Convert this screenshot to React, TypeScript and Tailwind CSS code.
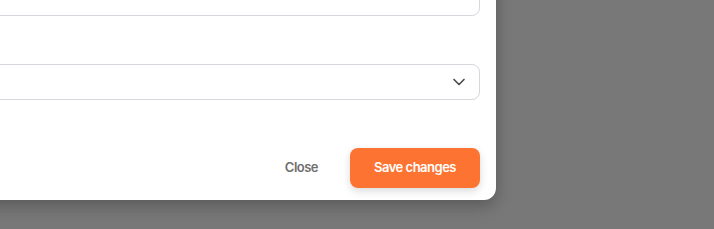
import { ChevronDown } from "lucide-react";

export default function App() {
  return (
    <div
      className="w-[714px] h-[229px] overflow-hidden bg-[#787878]"
      style={{ fontFamily: "Inter, 'Noto Sans', sans-serif" }}
    >
      <div className="w-[600px] -ml-[104px] -mt-[40px] bg-white rounded-b-xl shadow-[0_6px_16px_rgba(0,0,0,0.25)] px-4 pt-4 pb-3">
        {/* text input */}
        <input
          type="text"
          className="block w-full h-10 rounded-lg border border-[#d6d6dc] px-3 text-sm outline-none"
        />

        {/* select */}
        <div className="mt-12 relative">
          <div className="flex items-center justify-end h-9 w-full rounded-lg border border-[#d6d6dc] pr-[10px]">
            <ChevronDown className="w-5 h-5 text-[#4a4a4a]" strokeWidth={2} />
          </div>
        </div>

        {/* footer */}
        <div className="mt-12 flex items-center justify-end gap-2">
          <button className="h-10 px-6 rounded-lg text-[13px] font-semibold tracking-[-0.5px] text-[#6f6f6f]">
            Close
          </button>
          <button className="h-10 px-6 rounded-lg bg-[#fd7432] text-[13px] font-semibold tracking-[-0.5px] text-white shadow-[0_3px_8px_rgba(0,0,0,0.15)]">
            Save changes
          </button>
        </div>
      </div>
    </div>
  );
}
